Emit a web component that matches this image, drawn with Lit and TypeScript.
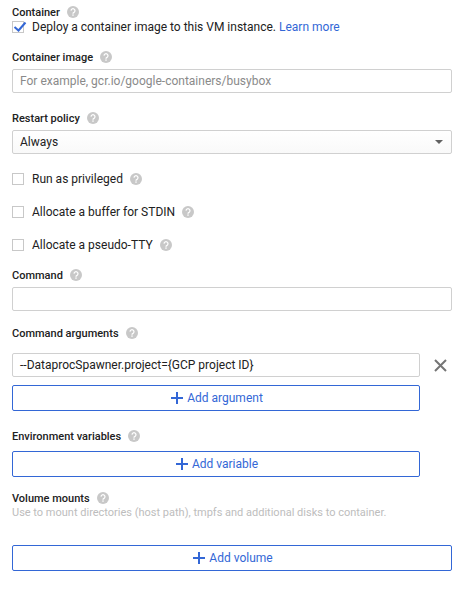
import { LitElement, css, html } from 'lit';
import { customElement } from 'lit/decorators.js';

const help = html`<svg class="help" width="12" height="12" viewBox="0 0 14 14">
  <circle cx="7" cy="7" r="7" fill="#c8c8c8"></circle>
  <path d="M4.7 5.4a2.3 2.3 0 1 1 3.5 2c-.8.4-1.2.8-1.2 1.6" fill="none" stroke="#fff" stroke-width="1.5"></path>
  <rect x="6.2" y="9.8" width="1.6" height="1.6" fill="#fff"></rect>
</svg>`;

const plus = html`<svg class="plus" width="12" height="12" viewBox="0 0 12 12">
  <path d="M6 0v12M0 6h12" fill="none" stroke="#3367d6" stroke-width="2"></path>
</svg>`;

@customElement('app-root')
export class AppRoot extends LitElement {
  static styles = css`
    :host {
      display: block;
      width: 464px;
      height: 597px;
      overflow: hidden;
      background: #fff;
      box-sizing: border-box;
      padding: 5px 12px 0 12px;
      font-family: Roboto, "Liberation Sans", sans-serif;
      font-size: 12px;
      color: #212121;
    }
    .label {
      display: flex;
      align-items: center;
      gap: 7px;
      height: 14px;
      font-size: 11px;
      font-weight: 500;
      color: #212121;
    }
    .help { flex: none; }
    .deploy {
      display: flex;
      align-items: center;
      height: 16px;
    }
    .box {
      flex: none;
      width: 10px;
      height: 10px;
      border: 1px solid #c8c8c8;
      margin-right: 8px;
      position: relative;
    }
    .box svg { position: absolute; left: -1px; top: -3px; }
    a { color: #3367d6; text-decoration: none; margin-left: 3px; }
    .field {
      box-sizing: border-box;
      height: 24px;
      border: 1px solid #d0d0d0;
      border-radius: 2px;
      padding: 0 7px;
      display: flex;
      align-items: center;
      font-size: 12px;
      background: #fff;
    }
    .placeholder { color: #8a8a8a; }
    .select {
      justify-content: space-between;
      background: linear-gradient(#fff, #f9f9f9);
    }
    .caret {
      width: 0;
      height: 0;
      border-left: 4px solid transparent;
      border-right: 4px solid transparent;
      border-top: 4px solid #616161;
      margin-right: 1px;
    }
    .check {
      display: flex;
      align-items: center;
      height: 16px;
    }
    .check .help { margin-left: 7px; }
    .args {
      display: flex;
      align-items: center;
    }
    .args .field { width: 408px; }
    .close { margin-left: 14px; flex: none; }
    .add {
      box-sizing: border-box;
      height: 26px;
      border: 1px solid #3367d6;
      border-radius: 2px;
      padding-left: 2px;
      display: flex;
      align-items: center;
      justify-content: center;
      gap: 4px;
      color: #3367d6;
      font-size: 12px;
      background: #fff;
    }
    .narrow { width: 408px; }
    .desc {
      font-size: 11px;
      color: #bdbdbd;
      height: 14px;
      line-height: 14px;
      margin-top: 1px;
    }
    .m-image { margin-top: 15px; }
    .m-field { margin-top: 5px; }
    .m-restart { margin-top: 18px; }
    .m-priv { margin-top: 17px; }
    .m-check { margin-top: 17px; }
    .m-cmd { margin-top: 15px; }
    .m-args { margin-top: 15px; }
    .m-argfield { margin-top: 13px; }
    .m-add { margin-top: 8px; }
    .m-env { margin-top: 18px; }
    .m-envadd { margin-top: 8px; }
    .m-vol { margin-top: 14px; }
    .m-voladd { margin-top: 25px; }
  `;

  render() {
    return html`
      <div class="label">Container ${help}</div>
      <div class="deploy">
        <span class="box">
          <svg width="16" height="16" viewBox="0 0 16 16"><path d="M2.5 8l4 3.5 7-8" fill="none" stroke="#3367d6" stroke-width="2"></path></svg>
        </span>
        Deploy a container image to this VM instance. <a>Learn more</a>
      </div>

      <div class="label m-image">Container image ${help}</div>
      <div class="field m-field placeholder">For example, gcr.io/google-containers/busybox</div>

      <div class="label m-restart">Restart policy ${help}</div>
      <div class="field select m-field">Always <span class="caret"></span></div>

      <div class="check m-priv"><span class="box"></span>Run as privileged ${help}</div>
      <div class="check m-check"><span class="box"></span>Allocate a buffer for STDIN ${help}</div>
      <div class="check m-check"><span class="box"></span>Allocate a pseudo-TTY ${help}</div>

      <div class="label m-cmd">Command ${help}</div>
      <div class="field m-field"></div>

      <div class="label m-args">Command arguments ${help}</div>
      <div class="args m-argfield">
        <div class="field">--DataprocSpawner.project={GCP project ID}</div>
        <svg class="close" width="13" height="13" viewBox="0 0 13 13"><path d="M1 1l11 11M12 1L1 12" fill="none" stroke="#757575" stroke-width="2"></path></svg>
      </div>
      <div class="add narrow m-add">${plus} Add argument</div>

      <div class="label m-env">Environment variables ${help}</div>
      <div class="add narrow m-envadd">${plus} Add variable</div>

      <div class="label m-vol">Volume mounts ${help}</div>
      <div class="desc">Use to mount directories (host path), tmpfs and additional disks to container.</div>
      <div class="add m-voladd">${plus} Add volume</div>
    `;
  }
}
